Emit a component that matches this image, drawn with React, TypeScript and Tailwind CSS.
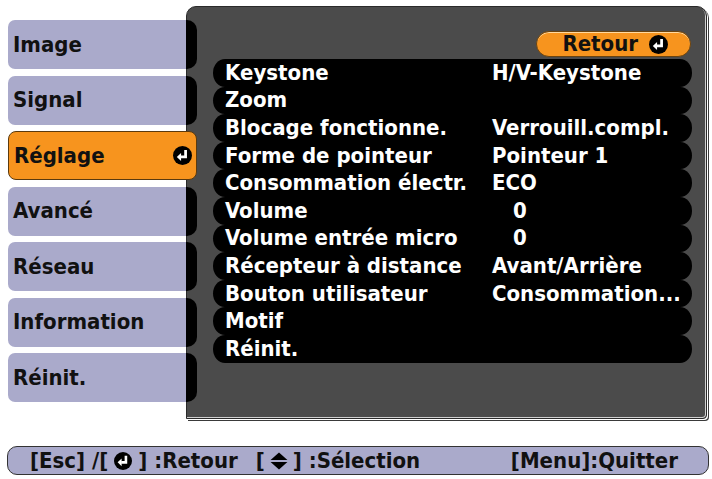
import React from "react";

const font = "font-['DejaVu_Sans_Condensed','DejaVu_Sans',sans-serif] font-bold [font-stretch:condensed]";

const tabs = ["Image", "Signal", "Réglage", "Avancé", "Réseau", "Information", "Réinit."];

const rows: { label: string; value?: string; indent?: boolean }[] = [
  { label: "Keystone", value: "H/V-Keystone" },
  { label: "Zoom" },
  { label: "Blocage fonctionne.", value: "Verrouill.compl." },
  { label: "Forme de pointeur", value: "Pointeur 1" },
  { label: "Consommation électr.", value: "ECO" },
  { label: "Volume", value: "0", indent: true },
  { label: "Volume entrée micro", value: "0", indent: true },
  { label: "Récepteur à distance", value: "Avant/Arrière" },
  { label: "Bouton utilisateur", value: "Consommation..." },
  { label: "Motif" },
  { label: "Réinit." },
];

function EnterIcon({ size = 18 }: { size?: number }) {
  return (
    <svg width={size} height={size} viewBox="0 0 16 16">
      <circle cx="8" cy="8" r="8" fill="#000" />
      <path d="M10.6 3.4V9.2H6.4" fill="none" stroke="#fff" strokeWidth="2.3" />
      <polygon points="3.2,9.2 6.8,5.8 6.8,12.6" fill="#fff" />
    </svg>
  );
}

function UpDownIcon() {
  return (
    <svg width="18" height="18" viewBox="0 0 16 16">
      <polygon points="8,0.5 15.5,7.2 0.5,7.2" fill="#000" />
      <polygon points="0.5,8.8 15.5,8.8 8,15.5" fill="#000" />
    </svg>
  );
}

function Tab({ label, active }: { label: string; active?: boolean }) {
  if (active) {
    return (
      <div className="flex h-[49px] items-center justify-between rounded-[8px] border border-[#5b3a0e] bg-[#f7941e] pl-[5px] pr-[4px] text-[22px] leading-none text-[#111]">
        <span>{label}</span>
        <EnterIcon size={19} />
      </div>
    );
  }
  return (
    <div className="flex h-[49px]">
      <div className="flex w-[178px] items-center rounded-l-[7px] bg-[#aaaacb] pl-[5px] text-[22px] leading-none text-[#111]">
        {label}
      </div>
      <div className="w-[11px] rounded-r-[10px] bg-black" />
    </div>
  );
}

export default function App() {
  return (
    <div className={`relative h-[479px] w-[712px] overflow-hidden bg-white ${font}`}>
      <div className="flex pt-[6px]">
        <div className="relative z-10 -mr-[11px] ml-[8px] mt-[14px] flex w-[189px] flex-col gap-[6.5px]">
          {tabs.map((t) => (
            <Tab key={t} label={t} active={t === "Réglage"} />
          ))}
        </div>
        <div className="flex h-[413px] w-[521px] flex-col rounded-t-[10px] rounded-br-[4px] border border-[#2a2a2a] bg-[#4b4b4b] pl-[26px] pr-[14px] pt-[24px] shadow-[inset_-1px_-1px_0_#d0d0d0,1px_1px_0_#fff,2px_2px_0_#3a3a3a]">
          <div className="flex justify-end pr-[1px]">
            <div className="flex h-[26px] w-[155px] items-center justify-end gap-[11px] rounded-full border border-[#6a4310] bg-[#f7941e] pr-[22px] text-[22px] leading-none text-[#111] shadow-[inset_0_1px_0_#ffd9a0]">
              <span>Retour</span>
              <EnterIcon size={19} />
            </div>
          </div>
          <div className="mt-[2px] flex flex-col">
            {rows.map((r) => (
              <div
                key={r.label}
                className="flex h-[27.6px] items-center rounded-[12px/14px] bg-black pl-[12px] text-[22px] leading-none text-white"
              >
                <span className="w-[267px] whitespace-nowrap">{r.label}</span>
                {r.value && (
                  <span className={`whitespace-nowrap ${r.indent ? "pl-[21px]" : ""}`}>{r.value}</span>
                )}
              </div>
            ))}
          </div>
        </div>
      </div>
      <div className="ml-[7px] mt-[27px] flex h-[29px] w-[702px] items-center rounded-[10px] border-[1.5px] border-[#333] bg-[#aaaacb] pl-[22px] pr-[30px] text-[22px] leading-none text-[#111]">
        <span className="flex items-center whitespace-nowrap">
          [Esc] /[<span className="mx-[6px] inline-flex"><EnterIcon size={18} /></span>] :Retour
        </span>
        <span className="ml-[18px] flex items-center whitespace-nowrap">
          [<span className="mx-[5px] inline-flex"><UpDownIcon /></span>] :Sélection
        </span>
        <span className="ml-auto whitespace-nowrap">[Menu]:Quitter</span>
      </div>
    </div>
  );
}
